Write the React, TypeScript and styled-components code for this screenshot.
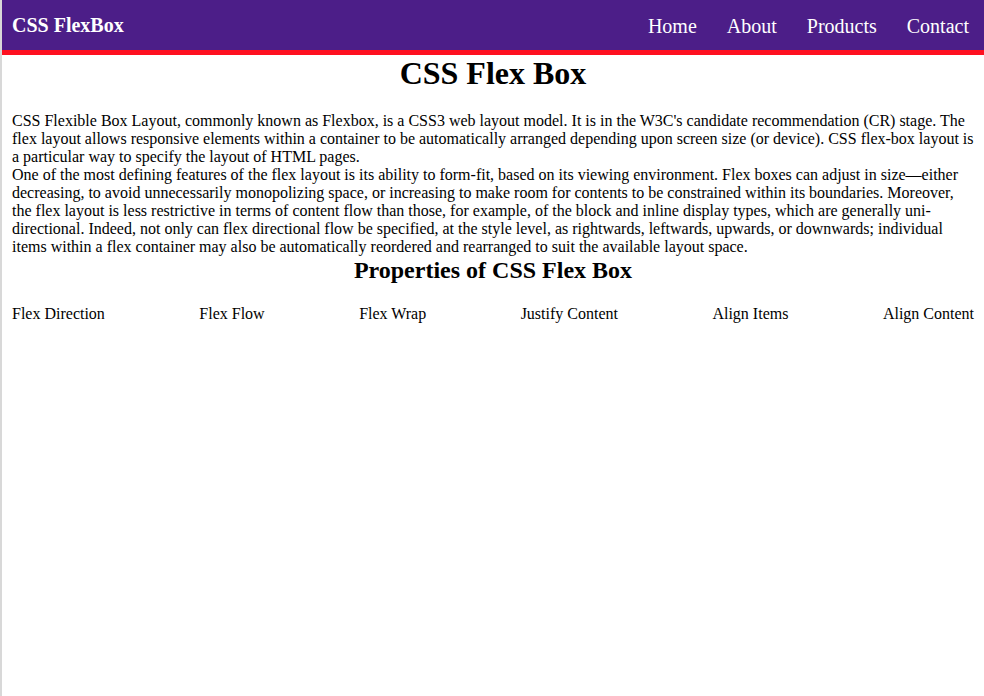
import React from "react";
import styled, { createGlobalStyle } from "styled-components";

const Global = createGlobalStyle`
  html, body { margin: 0; padding: 0; background: #fff; }
  body { font-family: "Liberation Serif", "Times New Roman", serif; color: #000; }
`;

const Page = styled.div`
  min-height: 100vh;
  border-left: 2px solid #d8d8d8;
  box-sizing: border-box;
`;

const Header = styled.header`
  height: 50px;
  background: #4c1e88;
  border-bottom: 5px solid #fe1020;
  display: flex;
  align-items: center;
  justify-content: space-between;
  padding: 0 15px 0 10px;
  color: #fff;
`;

const Logo = styled.div`
  font-size: 20px;
  font-weight: bold;
`;

const Nav = styled.nav`
  display: flex;
  gap: 30px;
  padding-top: 2px;
`;

const NavLink = styled.a`
  font-size: 20px;
  color: #fff;
  text-decoration: none;
`;

const Main = styled.main`
  padding: 0 10px;
`;

const Title = styled.h1`
  font-size: 32px;
  font-weight: bold;
  text-align: center;
  margin: 0 0 20px;
`;

const Text = styled.p`
  font-size: 16px;
  margin: 0;
`;

const SubTitle = styled.h2`
  font-size: 24px;
  font-weight: bold;
  text-align: center;
  margin: 1px 0 21px;
`;

const Props = styled.div`
  display: flex;
  justify-content: space-between;
  font-size: 16px;
`;

const Prop = styled.div``;

const links = ["Home", "About", "Products", "Contact"];
const props = [
  "Flex Direction",
  "Flex Flow",
  "Flex Wrap",
  "Justify Content",
  "Align Items",
  "Align Content",
];

export default function App() {
  return (
    <Page>
      <Global />
      <Header>
        <Logo>CSS FlexBox</Logo>
        <Nav>
          {links.map((l) => (
            <NavLink key={l} href="#">
              {l}
            </NavLink>
          ))}
        </Nav>
      </Header>
      <Main>
        <Title>CSS Flex Box</Title>
        <Text>
          CSS Flexible Box Layout, commonly known as Flexbox, is a CSS3 web layout model. It is in the W3C's candidate recommendation (CR) stage. The flex layout allows responsive elements within a container to be automatically arranged depending upon screen size (or device). CSS flex-box layout is a particular way to specify the layout of HTML pages.
        </Text>
        <Text>
          One of the most defining features of the flex layout is its ability to form-fit, based on its viewing environment. Flex boxes can adjust in size—either decreasing, to avoid unnecessarily monopolizing space, or increasing to make room for contents to be constrained within its boundaries. Moreover, the flex layout is less restrictive in terms of content flow than those, for example, of the block and inline display types, which are generally uni-directional. Indeed, not only can flex directional flow be specified, at the style level, as rightwards, leftwards, upwards, or downwards; individual items within a flex container may also be automatically reordered and rearranged to suit the available layout space.
        </Text>
        <SubTitle>Properties of CSS Flex Box</SubTitle>
        <Props>
          {props.map((p) => (
            <Prop key={p}>{p}</Prop>
          ))}
        </Props>
      </Main>
    </Page>
  );
}
